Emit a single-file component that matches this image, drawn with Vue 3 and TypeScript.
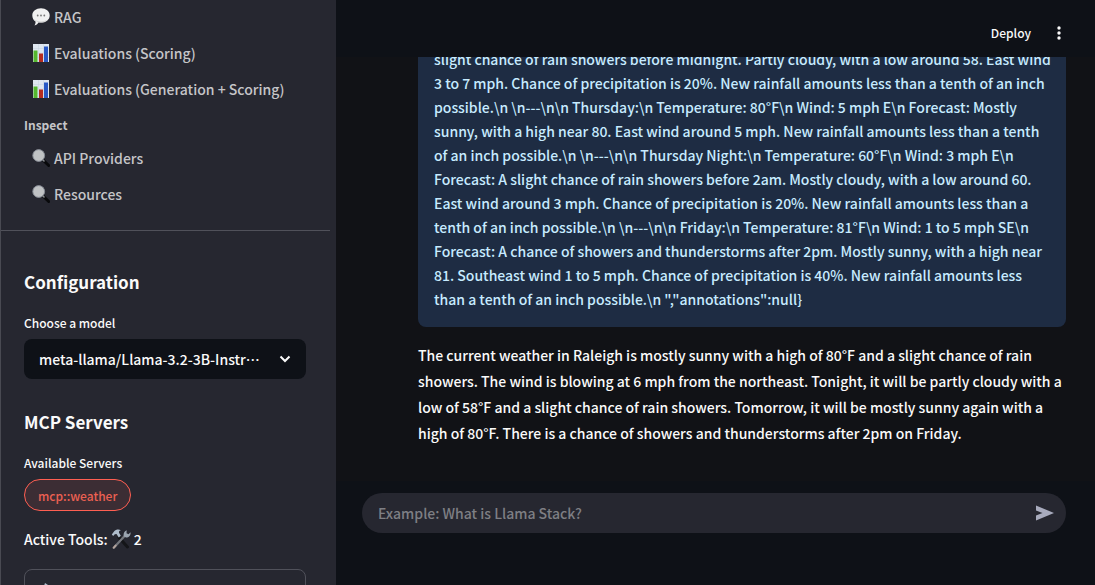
<script setup lang="ts">
import { ref } from 'vue'

interface NavItem { label: string; icon: 'chat' | 'chart' | 'search' }

const toolItems: NavItem[] = [
  { label: 'RAG', icon: 'chat' },
  { label: 'Evaluations (Scoring)', icon: 'chart' },
  { label: 'Evaluations (Generation + Scoring)', icon: 'chart' },
]
const inspectItems: NavItem[] = [
  { label: 'API Providers', icon: 'search' },
  { label: 'Resources', icon: 'search' },
]
const groups = [
  { title: '', items: toolItems },
  { title: 'Inspect', items: inspectItems },
]

const models = ['meta-llama/Llama-3.2-3B-Instruct']
const model = ref(models[0])
const prompt = ref('')

const toolOutput = String.raw`slight chance of rain showers before midnight. Partly cloudy, with a low around 58. East wind
3 to 7 mph. Chance of precipitation is 20%. New rainfall amounts less than a tenth of an inch
possible.\n \n---\n\n Thursday:\n Temperature: 80°F\n Wind: 5 mph E\n Forecast: Mostly
sunny, with a high near 80. East wind around 5 mph. New rainfall amounts less than a tenth
of an inch possible.\n \n---\n\n Thursday Night:\n Temperature: 60°F\n Wind: 3 mph E\n
Forecast: A slight chance of rain showers before 2am. Mostly cloudy, with a low around 60.
East wind around 3 mph. Chance of precipitation is 20%. New rainfall amounts less than a
tenth of an inch possible.\n \n---\n\n Friday:\n Temperature: 81°F\n Wind: 1 to 5 mph SE\n
Forecast: A chance of showers and thunderstorms after 2pm. Mostly sunny, with a high near
81. Southeast wind 1 to 5 mph. Chance of precipitation is 40%. New rainfall amounts less
than a tenth of an inch possible.\n ","annotations":null}`

const answer = `The current weather in Raleigh is mostly sunny with a high of 80°F and a slight chance of rain
showers. The wind is blowing at 6 mph from the northeast. Tonight, it will be partly cloudy with a
low of 58°F and a slight chance of rain showers. Tomorrow, it will be mostly sunny again with a
high of 80°F. There is a chance of showers and thunderstorms after 2pm on Friday.`
</script>

<template>
  <div class="app">
    <aside class="sidebar">
      <nav class="nav">
        <section v-for="group in groups" :key="group.title">
          <h3 v-if="group.title" class="nav-title">{{ group.title }}</h3>
          <a v-for="item in group.items" :key="item.label" class="nav-link" href="#">
            <svg v-if="item.icon === 'chat'" class="emoji" viewBox="0 0 18 18" aria-hidden="true">
              <path d="M9 .3c4.900 0 8.700 2.900 8.700 7.100S13.900 14.600 9 14.600c-.9 0-1.700 0-2.500-.2-.8 1.400-2.200 2.600-4 3 .8-1 1.200-2.300 1-3.800C1.500 12.200.3 10 .3 7.400.3 3.200 4.100.3 9 .3z" fill="#f1f1f1" />
              <path d="M2 11c2.500 3.300 11.500 3.300 14 0-1.500 2.300-4 3.500-7 3.500-3.300 0-5.700-1.300-7-3.500z" fill="#cfcfcf" />
              <circle cx="5.700" cy="7.500" r=".9" fill="#777" /><circle cx="9" cy="7.500" r=".9" fill="#777" /><circle cx="12.300" cy="7.500" r=".9" fill="#777" />
            </svg>
            <svg v-else-if="item.icon === 'chart'" class="emoji" viewBox="0 0 18 18" aria-hidden="true">
              <path d="M1 0h16v18H1z" fill="#dfe7f0" />
              <path d="M1 4.500h16M1 9h16M1 13.500h16M6.500 0v18M11.500 0v18" stroke="#c6d2e0" stroke-width=".5" />
              <path d="M1.500 6.500H5.500V18h-4z" fill="#55b82e" /><path d="M7 9.500h4V18H7z" fill="#b52c20" /><path d="M12 2.500h4V18h-4z" fill="#2858c5" />
            </svg>
            <svg v-else class="emoji" viewBox="0 0 18 18" aria-hidden="true">
              <path d="M11 11l5.700 5.500" stroke="#08090b" stroke-width="3" stroke-linecap="round" />
              <path d="M10.500 10.500l2 2" stroke="#8b8f94" stroke-width="1.500" />
              <circle cx="6.700" cy="6.500" r="5.900" fill="#bfc2c4" stroke="#858a93" stroke-width="1" />
            </svg>
            <span>{{ item.label }}</span>
          </a>
        </section>
      </nav>
      <div class="controls">
        <h2>Configuration</h2>
        <label class="label" for="model">Choose a model</label>
        <div class="select-wrap">
          <select id="model" v-model="model">
            <option v-for="m in models" :key="m">{{ m }}</option>
          </select>
          <svg class="chevron" viewBox="0 0 12 8" aria-hidden="true"><path d="M1.500 1.500L6 6l4.500-4.500" /></svg>
        </div>
        <h2 class="servers">MCP Servers</h2>
        <p id="servers-label" class="label">Available Servers</p>
        <button class="pill" type="button" aria-pressed="true" aria-describedby="servers-label">mcp::weather</button>
        <p class="active">
          <span>Active Tools:</span>
          <svg class="tools" viewBox="0 0 20 20" aria-label="tools" role="img">
            <path d="M8 8.500l8.500 9.500" stroke="#141518" stroke-width="3" stroke-linecap="round" />
            <path d="M3 18.500L14.500 6" stroke="#74777d" stroke-width="2.200" stroke-linecap="round" />
            <path d="M2.600 18.800l2-2.200" stroke="#b3a39c" stroke-width="2" stroke-linecap="round" />
            <path d="M13 7.500c-1-2.500.2-5.300 2.700-6.200L15.500 4.300l2 .9 2-2c.5 3-1.500 5.300-4.500 5.300z" fill="#9ba5b0" />
            <path d="M.8 5.500L3 2.500C5 .4 7.500.2 10 1.200 8.500 1.500 7.800 2.300 8 3.800l1.800 3-2 1.700L5.500 5 3.800 5.300 2.200 7z" fill="#aebccb" />
          </svg>
          <span>2</span>
        </p>
        <div class="tool-box">
          <svg class="wrench" viewBox="0 0 16 16" aria-hidden="true"><path d="M4 0l3 2v3l7 8-2 2-7-8-3-1z" /></svg>
        </div>
      </div>
    </aside>

    <main class="main">
      <header class="header">
        <button class="deploy" type="button">Deploy</button>
        <button class="menu" type="button" aria-label="Main menu">
          <svg viewBox="0 0 4 14" aria-hidden="true"><circle cx="2" cy="2" r="1.700" /><circle cx="2" cy="7" r="1.700" /><circle cx="2" cy="12" r="1.700" /></svg>
        </button>
      </header>
      <section class="chat">
        <div class="output">{{ toolOutput }}</div>
        <p class="answer">{{ answer }}</p>
      </section>
      <footer class="composer">
        <form class="prompt" @submit.prevent>
          <input v-model="prompt" type="text" aria-label="Message" placeholder="Example: What is Llama Stack?" />
          <button type="submit" aria-label="Send">
            <svg viewBox="0 0 18 16" aria-hidden="true"><path d="M0 .5L18 8 0 15.500V10.500L6.500 8 0 5.500z" /></svg>
          </button>
        </form>
      </footer>
    </main>
  </div>
</template>

<style>
body {
  margin: 0;
  background: #0e1117;
}
</style>

<style scoped>
.app {
  display: flex;
  height: 100vh;
  overflow: hidden;
  color: #fafafa;
  font-family: "Noto Sans CJK KR", "Noto Sans", sans-serif;
  font-size: 14px;
  font-weight: 500;
}
* { box-sizing: border-box; }
h2, h3, p { margin: 0; }
button, input, select {
  font: inherit;
  color: inherit;
  border: 0;
  background: none;
  padding: 0;
  margin: 0;
}
.sidebar {
  flex: 0 0 336px;
  overflow: hidden;
  background: #262730;
  border-left: 1px solid #494a52;
}
.nav {
  margin-right: 6px;
  padding: 1px 16px 16px 23px;
  border-bottom: 1px solid #50515a;
}
.nav-link {
  display: flex;
  align-items: center;
  gap: 4px;
  height: 32px;
  margin-bottom: 4px;
  padding-left: 8px;
  color: #c5c5c8;
  text-decoration: none;
  white-space: nowrap;
}
.emoji { width: 18px; height: 18px; flex: none; }
.nav-title {
  margin: 10px 0 7px;
  color: #c5c5c8;
  font-size: 12px;
  font-weight: 700;
  line-height: 20px;
}
.controls { padding: 38px 30px 0 23px; }
h2 {
  font-size: 17px;
  font-weight: 700;
  line-height: 26px;
}
.label {
  display: block;
  margin-top: 16px;
  font-size: 12px;
  line-height: 24px;
}
.select-wrap {
  display: grid;
  align-items: center;
  margin-top: 4px;
}
.select-wrap > * { grid-area: 1 / 1; }
select {
  width: 100%;
  height: 40px;
  padding: 0 44px 0 15px;
  appearance: none;
  background: #0e1117;
  border-radius: 8px;
  text-overflow: ellipsis;
}
.chevron {
  justify-self: end;
  width: 12px;
  height: 8px;
  margin-right: 15px;
  fill: none;
  stroke: #fafafa;
  stroke-width: 2;
  pointer-events: none;
}
.servers { margin-top: 30px; }
.pill {
  display: block;
  height: 32px;
  margin-top: 4px;
  padding: 0 13px;
  border: 1px solid #ff5f52;
  border-radius: 16px;
  background: #3c2d34;
  color: #ec6052;
  font-size: 12px;
}
.active {
  display: flex;
  align-items: center;
  gap: 3px;
  margin-top: 16px;
  line-height: 24px;
}
.tools { width: 20px; height: 20px; }
.tool-box {
  height: 60px;
  margin-top: 18px;
  padding: 13px 16px;
  border: 1px solid #50515a;
  border-radius: 8px;
}
.wrench { width: 16px; height: 16px; fill: #aebccb; }
.main {
  flex: 1;
  min-width: 0;
  display: flex;
  flex-direction: column;
  background: #111216;
}
.header {
  flex: 0 0 57px;
  display: flex;
  align-items: center;
  justify-content: flex-end;
  gap: 26px;
  padding: 8px 34px 0 0;
  background: #0e1117;
}
.menu { display: flex; }
.menu svg { width: 4px; height: 14px; fill: #fafafa; }
.deploy { font-size: 12px; }
.chat {
  flex: 1;
  min-height: 0;
  display: flex;
  flex-direction: column;
  justify-content: flex-end;
  overflow: hidden;
  padding: 0 29px 35px 82px;
}
.output {
  padding: 16px;
  border-radius: 8px;
  background: #1e2c43;
  color: #c7ebff;
  line-height: 24px;
  white-space: pre;
}
.answer {
  margin-top: 15px;
  line-height: 26px;
  white-space: pre;
}
.composer {
  flex: 0 0 104px;
  padding: 12px 29px 0 26px;
  background: #0e1117;
}
.prompt {
  display: flex;
  align-items: center;
  height: 40px;
  padding: 0 12px 0 16px;
  border-radius: 20px;
  background: #262730;
}
.prompt input { flex: 1; min-width: 0; outline: 0; }
.prompt input::placeholder { color: #7e7f84; opacity: 1; }
.prompt button { display: flex; }
.prompt svg { width: 18px; height: 16px; fill: #a8abbd; }
</style>
